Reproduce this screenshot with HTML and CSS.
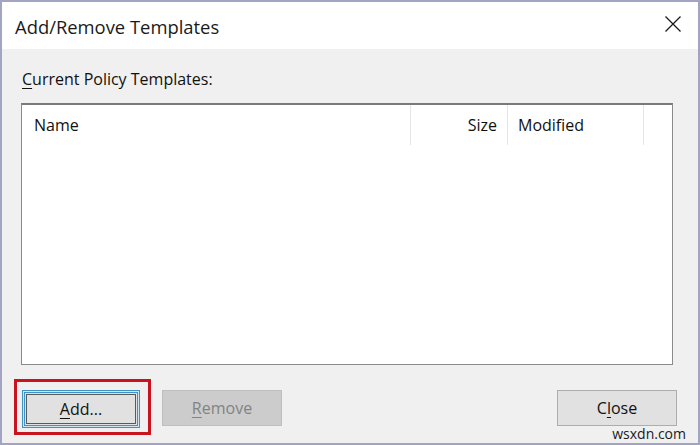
FILE: index.html
```html
<!DOCTYPE html>
<html>
<head>
<meta charset="utf-8">
<link rel="stylesheet" href="styles.css">
</head>
<body>
<div class="window">
  <div class="titlebar">
    <span class="title">Add/Remove Templates</span>
    <span class="close-x">
      <svg width="16" height="16" viewBox="0 0 16 16"><path d="M0.5 0.5 L15.5 15.5 M15.5 0.5 L0.5 15.5" stroke="#1a1a1a" stroke-width="1.3" fill="none"/></svg>
    </span>
  </div>
  <div class="content">
    <div class="label"><u>C</u>urrent Policy Templates:</div>
    <div class="listbox">
      <div class="header">
        <div class="col col-name">Name</div>
        <div class="col col-size">Size</div>
        <div class="col col-mod">Modified</div>
        <div class="col col-rest"></div>
      </div>
    </div>
    <div class="buttons">
      <div class="focus-wrap">
        <button class="btn btn-default"><span class="btn-inner"><u>A</u>dd...</span></button>
      </div>
      <button class="btn btn-disabled"><u>R</u>emove</button>
      <div class="spacer"></div>
      <button class="btn">C<u>l</u>ose</button>
    </div>
  </div>
  <div class="watermark">wsxdn.com</div>
</div>
</body>
</html>
```
FILE: styles.css
```css
html, body {
  margin: 0;
  padding: 0;
}
body {
  width: 700px;
  height: 445px;
  overflow: hidden;
  font-family: "Open Sans", "Noto Sans", sans-serif;
  color: #111;
}
.window {
  position: relative;
  width: 700px;
  height: 445px;
  box-sizing: border-box;
  border: 2px solid #a3a3c4;
  background: #f0f0f0;
  display: flex;
  flex-direction: column;
}
.titlebar {
  height: 47px;
  background: #fff;
  display: flex;
  align-items: center;
  justify-content: space-between;
  padding: 0 17px 0 13px;
}
.title {
  font-size: 18.4px;
  color: #1a1a1a;
  padding-top: 2px;
}
.close-x {
  display: flex;
  width: 16px;
  height: 16px;
  margin-top: -4px;
}
.content {
  flex: 1;
  display: flex;
  flex-direction: column;
  padding: 0 21px 0 19px;
}
.label {
  font-size: 16px;
  color: #111;
  margin-top: 19px;
  margin-left: 1px;
  line-height: 22px;
}
.label u {
  text-underline-offset: 3px;
}
.listbox {
  margin-top: 13px;
  margin-right: 4px;
  height: 262px;
  box-sizing: border-box;
  background: #fff;
  border: 1px solid #8a8a8a;
  border-top: 2px solid #7a7a7a;
}
.header {
  display: flex;
  height: 40px;
}
.col {
  box-sizing: border-box;
  border-right: 1px solid #e5e5e5;
  font-size: 16px;
  line-height: 40px;
  color: #111;
}
.col-name {
  width: 389px;
  padding-left: 12px;
}
.col-size {
  width: 97px;
  text-align: right;
  padding-right: 10px;
}
.col-mod {
  width: 136px;
  padding-left: 10px;
}
.col-rest {
  flex: 1;
  border-right: none;
}
.buttons {
  display: flex;
  align-items: flex-start;
  margin-top: 25px;
  padding-left: 1px;
}
.focus-wrap {
  position: relative;
  margin-right: 22px;
}
.focus-wrap::after {
  content: "";
  position: absolute;
  left: -8px;
  top: -11px;
  right: -11px;
  bottom: -7px;
  border: 3px solid #c8141e;
  pointer-events: none;
}
.btn {
  width: 120px;
  height: 36px;
  box-sizing: border-box;
  font-family: inherit;
  font-size: 16px;
  color: #111;
  background: #e1e1e1;
  border: 1px solid #adadad;
  margin: 0;
  padding: 0;
  display: flex;
  align-items: center;
  justify-content: center;
}
.btn u {
  text-underline-offset: 3px;
}
.btn-default {
  width: 118px;
  height: 38px;
  border: 1px solid #3f92c2;
  padding: 1px;
  background: #cde8f3;
}
.btn-inner {
  flex: 1;
  align-self: stretch;
  display: flex;
  align-items: center;
  justify-content: center;
  background: #e1e1e1;
  border: 1px solid #3f92c2;
  box-shadow: inset 0 0 0 1px #e1e1e1, inset 0 0 0 2px #5a5a5a;
}
.btn-disabled {
  background: #cccccc;
  border-color: #bfbfbf;
  color: #838383;
}
.spacer {
  flex: 1;
}
.watermark {
  position: absolute;
  right: 10px;
  bottom: 1px;
  font-size: 14px;
  color: #1a1a1a;
  background: #f0f0f0;
  line-height: 16px;
  padding: 0 2px;
}
```
